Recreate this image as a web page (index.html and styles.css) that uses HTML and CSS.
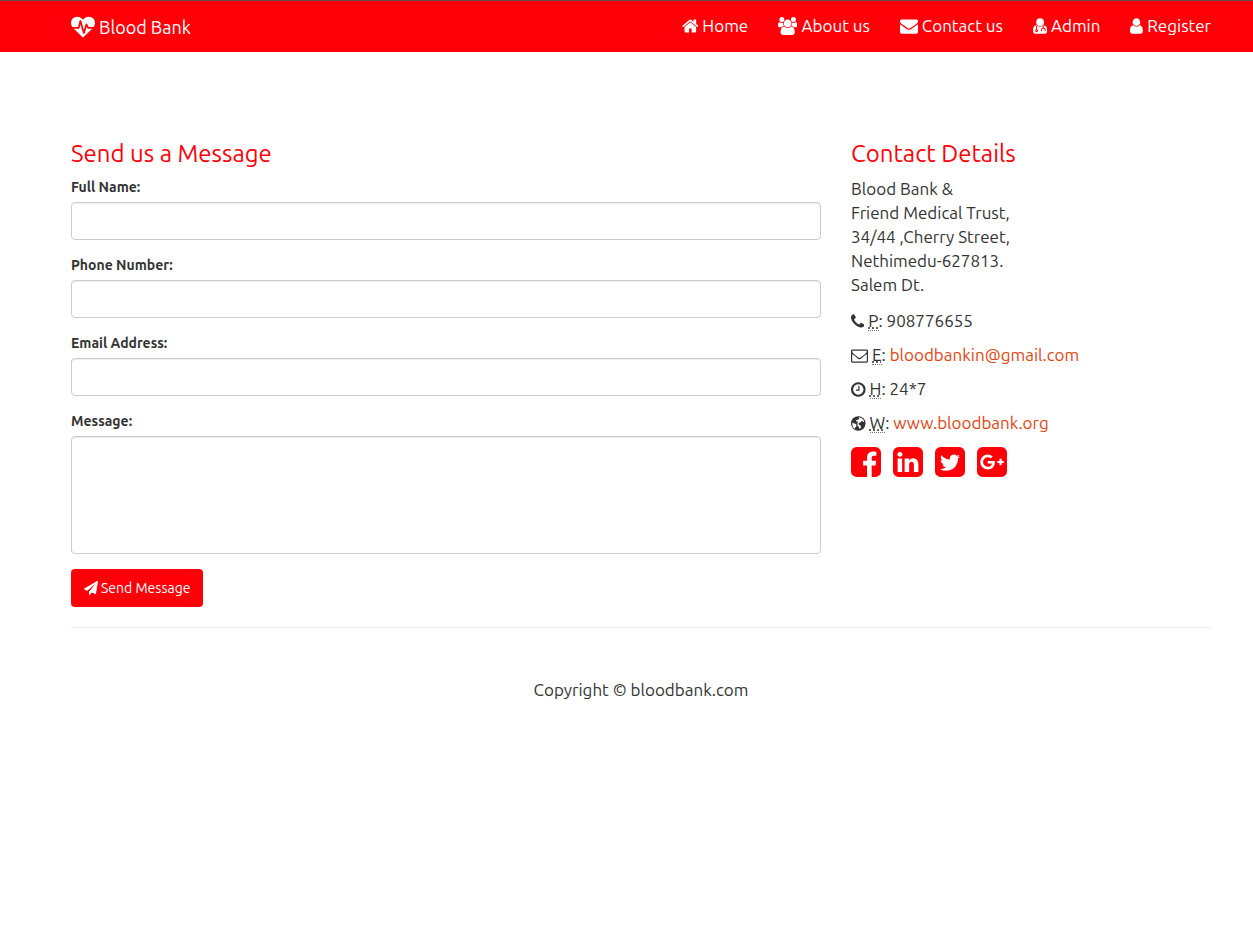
FILE: index.html
```html
<!DOCTYPE html>
<html lang="en">
<head>
<meta charset="utf-8">
<meta name="viewport" content="width=device-width, initial-scale=1">
<title>Blood Bank</title>
<link rel="stylesheet" href="styles.css">
</head>
<body>
<header class="navbar">
  <a class="brand" href="#">
    <svg class="icon icon-brand" viewBox="0 0 1792 1792" aria-hidden="true"><path d="M1280 1024h305q-5 6-10 10.500t-9 7.500l-3 4-623 600q-18 18-44 18t-44-18l-624-602q-5-2-21-20h369q22 0 39.500-13.500t22.500-34.500l70-281 190 667q6 20 23 33t39 13q21 0 38-13t23-33l146-485 56 112q18 35 57 35zm512-428q0 145-103 300h-369l-111-221q-8-17-25.500-27t-36.500-8q-45 5-56 46l-129 430-196-686q-6-20-23.500-33t-39.500-13-39 13.500-22 34.500l-116 464h-423q-103-155-103-300 0-220 127-344t351-124q62 0 126.500 21.500t120 58 95.500 68.500 76 68q36-36 76-68t95.500-68.500 120-58 126.500-21.500q224 0 351 124t127 344z"/></svg>
    <span>Blood Bank</span>
  </a>
  <nav class="menu">
    <a href="#"><svg class="icon" viewBox="64 0 1664 1792" aria-hidden="true"><path d="M1472 992v480q0 26-19 45t-45 19h-384v-384h-256v384h-384q-26 0-45-19t-19-45v-480q0-1 .5-3t.5-3l575-474 575 474q1 2 1 6zm223-69l-62 74q-8 9-21 11h-3q-13 0-21-7l-692-577-692 577q-12 8-24 7-13-2-21-11l-62-74q-8-10-7-23.500t11-21.500l719-599q32-26 76-26t76 26l244 204v-195q0-14 9-23t23-9h192q14 0 23 9t9 23v408l219 182q10 8 11 21.500t-7 23.500z"/></svg><span>Home</span></a>
    <a href="#"><svg class="icon" viewBox="0 0 1920 1792" aria-hidden="true"><path d="M593 896q-162 5-265 128h-134q-82 0-138-40.500t-56-118.500q0-353 124-353 6 0 43.500 21t97.500 42.500 119 21.500q67 0 133-23-5 37-5 66 0 139 81 256zm1071 637q0 120-73 189.500t-194 69.500h-874q-121 0-194-69.500t-73-189.500q0-53 3.500-103.500t14-109 26.500-108.500 43-97.500 62-81 85.500-53.500 111.500-20q10 0 43 21.500t73 48 107 48 135 21.500 135-21.500 107-48 73-48 43-21.500q61 0 111.500 20t85.500 53.500 62 81 43 97.500 26.500 108.500 14 109 3.500 103.500zm-1024-1277q0 106-75 181t-181 75-181-75-75-181 75-181 181-75 181 75 75 181zm704 384q0 159-112.500 271.500t-271.500 112.500-271.500-112.500-112.500-271.500 112.500-271.500 271.500-112.500 271.500 112.500 112.500 271.500zm576 225q0 78-56 118.500t-138 40.500h-134q-103-123-265-128 81-117 81-256 0-29-5-66 66 23 133 23 59 0 119-21.500t97.500-42.500 43.500-21q124 0 124 353zm-128-609q0 106-75 181t-181 75-181-75-75-181 75-181 181-75 181 75 75 181z"/></svg><span>About us</span></a>
    <a href="#"><svg class="icon" viewBox="0 0 1792 1792" aria-hidden="true"><path d="M1792 710v794q0 66-47 113t-113 47h-1472q-66 0-113-47t-47-113v-794q44 49 101 87 362 246 497 345 57 42 92.500 65.500t94.500 48 110 24.500h2q51 0 110-24.500t94.500-48 92.500-65.500q170-123 498-345 57-39 100-87zm0-294q0 79-49 151t-122 123q-376 261-468 325-10 7-42.500 30.500t-54 38-52 32.500-57.500 27-50 9h-2q-23 0-50-9t-57.500-27-52-32.500-54-38-42.500-30.500q-91-64-262-182.500t-205-142.500q-62-42-117-115.500t-55-136.500q0-78 41.500-130t118.500-52h1472q65 0 112.500 47t47.500 113z"/></svg><span>Contact us</span></a>
    <a href="#"><svg class="icon" viewBox="192 0 1408 1792" aria-hidden="true"><path d="M1600 1399q0 109-62.500 187t-150.500 78h-982q-88 0-150.500-78t-62.500-187q0-85 8.500-160.500t31.500-152 58.500-131 94-89 134.500-34.500q131 128 377 128t377-128q76 0 134.500 34.500t94 89 58.500 131 31.500 152 8.500 160.500z"/><circle cx="896" cy="512" r="384"/><path class="cutout" d="M550 900v370M1215 900v200M1030 1430v-130q0-170 185-170t185 170v130"/><circle class="cutout" cx="550" cy="1370" r="90"/></svg><span>Admin</span></a>
    <a href="#"><svg class="icon" viewBox="256 0 1280 1792" aria-hidden="true"><path d="M1536 1399q0 109-62.500 187t-150.500 78h-854q-88 0-150.500-78t-62.500-187q0-85 8.500-160.500t31.500-152 58.500-131 94-89 134.500-34.500q131 128 313 128t313-128q76 0 134.500 34.500t94 89 58.500 131 31.500 152 8.500 160.500zm-256-887q0 159-112.500 271.500t-271.500 112.500-271.500-112.500-112.500-271.500 112.500-271.500 271.500-112.500 271.500 112.500 112.500 271.500z"/></svg><span>Register</span></a>
  </nav>
</header>
<div class="page">
  <main class="columns">
    <section>
      <h1 class="title">Send us a Message</h1>
      <form class="form">
        <div class="field"><label for="name">Full Name:</label><input id="name" type="text"></div>
        <div class="field"><label for="phone">Phone Number:</label><input id="phone" type="tel"></div>
        <div class="field"><label for="email">Email Address:</label><input id="email" type="email"></div>
        <div class="field"><label for="message">Message:</label><textarea id="message" rows="5"></textarea></div>
        <button class="send" type="button"><svg class="icon" viewBox="0 0 1792 1792" aria-hidden="true"><path d="M1764 11q33 24 27 64l-256 1536q-5 29-32 45-14 8-31 8-11 0-24-5l-453-185-242 295q-18 23-49 23-13 0-22-4-19-7-30.500-23.500t-11.500-36.500v-349l864-1059-1069 925-395-162q-37-14-40-55-2-40 32-59l1664-960q15-9 32-9 20 0 36 11z"/></svg><span>Send Message</span></button>
      </form>
    </section>
    <section>
      <h2 class="title">Contact Details</h2>
      <address class="address">Blood Bank &amp;<br>Friend Medical Trust,<br>34/44 ,Cherry Street,<br>Nethimedu-627813.<br>Salem Dt.</address>
      <ul class="details">
        <li><svg class="icon" viewBox="192 0 1408 1792" aria-hidden="true"><path d="M1600 1240q0 27-10 70.500t-21 68.500q-21 50-122 106-94 51-186 51-27 0-53-3.500t-57.500-12.500-47-14.500-55.500-20.500-49-18q-98-35-175-83-127-79-264-216t-216-264q-48-77-83-175-3-9-18-49t-20.500-55.500-14.500-47-12.500-57.500-3.500-53q0-92 51-186 56-101 106-122 25-11 68.500-21t70.500-10q14 0 21 3 18 6 53 76 11 19 30 54t35 63.500 31 53.500q3 4 17.500 25t21.500 35.500 7 28.500q0 20-28.500 50t-62 55-62 53-28.500 46q0 9 5 22.500t8.500 20.500 14 24 11.500 19q76 137 174 235t235 174q2 1 19 11.500t24 14 20.500 8.500 22.500 5q18 0 46-28.500t53-62 55-62 50-28.500q14 0 28.500 7t35.500 21.500 25 17.500q25 15 53.500 31t63.500 35 54 30q70 35 76 53 3 7 3 21z"/></svg><span><abbr title="Phone">P</abbr>: 908776655</span></li>
        <li><svg class="icon" viewBox="0 0 1792 1792" aria-hidden="true"><path d="M1664 1504v-768q-32 36-69 66-268 206-426 338-51 43-83 67t-86.500 48.500-102.500 24.500h-2q-48 0-102.500-24.500t-86.500-48.500-83-67q-158-132-426-338-37-30-69-66v768q0 13 9.500 22.500t22.500 9.500h1472q13 0 22.500-9.500t9.500-22.500zm0-1051v-24.500l-.5-13-3-12.500-5.500-9-9-7.500-14-2.500h-1472q-13 0-22.500 9.500t-9.500 22.500q0 168 147 284 193 152 401 317 6 5 35 29.500t46 37.500 44.500 31.500 50.500 27.500 43 9h2q20 0 43-9t50.500-27.500 44.500-31.500 46-37.500 35-29.500q208-165 401-317 54-43 100.500-115.500t46.500-131.500zm128-37v1088q0 66-47 113t-113 47h-1472q-66 0-113-47t-47-113v-1088q0-66 47-113t113-47h1472q66 0 113 47t47 113z"/></svg><span><abbr title="Email">E</abbr>: <a href="mailto:bloodbankin@gmail.com">bloodbankin@gmail.com</a></span></li>
        <li><svg class="icon" viewBox="128 0 1536 1792" aria-hidden="true"><path d="M1024 544v448q0 14-9 23t-23 9h-320q-14 0-23-9t-9-23v-64q0-14 9-23t23-9h224v-352q0-14 9-23t23-9h64q14 0 23 9t9 23zm416 352q0-148-73-273t-198-198-273-73-273 73-198 198-73 273 73 273 198 198 273 73 273-73 198-198 73-273zm224 0q0 209-103 385.500t-279.500 279.500-385.500 103-385.500-103-279.500-279.500-103-385.500 103-385.500 279.500-279.500 385.500-103 385.500 103 279.500 279.500 103 385.500z"/></svg><span><abbr title="Hours">H</abbr>: 24*7</span></li>
        <li><svg class="icon" viewBox="128 0 1536 1792" aria-hidden="true"><circle cx="896" cy="896" r="768"/><path class="land" d="M960 250l230 40 230 190 110 230-90 40-120-120-140 40-20 90-130 30-120 120 50 130 170 60 60 170-110 170-100-30-50-190-120-150-10-200 70-140-70-60-90 40-60-110 130-90 180-30zM270 800l200 90 170 60 70 130-40 160-110 80-40 160-150-130-90-190z"/></svg><span><abbr title="Website">W</abbr>: <a href="#">www.bloodbank.org</a></span></li>
      </ul>
      <div class="social">
        <a href="#" aria-label="Facebook"><svg class="icon" viewBox="128 128 1536 1536"><path d="M1376 128q119 0 203.500 84.500t84.500 203.500v960q0 119-84.500 203.500t-203.500 84.500h-188v-595h199l30-232h-229v-148q0-56 23.500-84t91.500-28l122-1v-207q-63-9-178-9-136 0-217.500 80t-81.500 226v171h-200v232h200v595h-532q-119 0-203.500-84.500t-84.500-203.500v-960q0-119 84.500-203.500t203.500-84.500h960z"/></svg></a>
        <a href="#" aria-label="LinkedIn"><svg class="icon" viewBox="128 128 1536 1536"><path d="M365 1414h231v-694h-231v694zm246-908q-1-52-36-86t-93-34-94.500 34-36.500 86q0 51 35.500 85.500t92.500 34.500h1q59 0 95-34.500t36-85.500zm585 908h231v-398q0-154-73-233t-193-79q-136 0-209 117h2v-101h-231q3 66 0 694h231v-388q0-38 7-56 15-35 45-59.500t74-24.500q116 0 116 157v371zm468-998v960q0 119-84.500 203.500t-203.500 84.500h-960q-119 0-203.500-84.500t-84.500-203.500v-960q0-119 84.500-203.500t203.500-84.500h960q119 0 203.500 84.500t84.500 203.500z"/></svg></a>
        <a href="#" aria-label="Twitter"><svg class="icon" viewBox="128 128 1536 1536"><path d="M1408 610q-56 25-121 34 68-40 93-117-65 38-134 51-61-66-153-66-87 0-148.500 61.500t-61.500 148.500q0 29 5 48-129-7-242-65t-192-155q-29 50-29 106 0 114 91 175-47-1-100-26v2q0 75 50 133.500t123 72.500q-29 8-51 8-13 0-39-4 21 63 74.500 104t121.500 42q-116 90-261 90-26 0-50-3 148 94 322 94 112 0 210-35.500t168-95 120.500-137 75-162 24.500-168.500q0-18-1-27 63-45 105-109zm256-194v960q0 119-84.500 203.500t-203.500 84.500h-960q-119 0-203.500-84.500t-84.500-203.500v-960q0-119 84.500-203.500t203.500-84.500h960q119 0 203.500 84.500t84.500 203.500z"/></svg></a>
        <a href="#" aria-label="Google Plus"><svg class="icon" viewBox="128 128 1536 1536"><path d="M1045 905q0-26-6-64h-362v132h217q-3 24-16.500 50t-37.500 53-66.500 44.500-96.500 17.500q-99 0-169-71t-70-171 70-171 169-71q92 0 153 59l104-101q-108-100-257-100-160 0-272 112.500t-112 271.500 112 271.500 272 112.500q165 0 266.500-105t101.500-270zm345 46h109v-110h-109v-110h-110v110h-110v110h110v110h110v-110zm274-535v960q0 119-84.500 203.500t-203.500 84.500h-960q-119 0-203.500-84.500t-84.500-203.500v-960q0-119 84.500-203.500t203.500-84.500h960q119 0 203.500 84.500t84.500 203.500z"/></svg></a>
      </div>
    </section>
  </main>
  <footer class="footer">Copyright © bloodbank.com</footer>
</div>
</body>
</html>
```
FILE: styles.css
```css
* { box-sizing: border-box; }

body {
  margin: 0;
  background: #fff;
  color: #333;
  font: 17px/24px Ubuntu, "Noto Sans", sans-serif;
}

.icon { height: 17px; fill: currentColor; flex: none; }

.navbar {
  display: flex;
  align-items: center;
  justify-content: space-between;
  height: 52px;
  padding: 0 42px 0 71px;
  border-top: 1px solid #555;
  background: #ff0008;
}
.navbar a { display: flex; align-items: center; gap: 4px; color: #fff; text-decoration: none; }
.navbar .brand { font-size: 18px; }
.navbar .icon { height: 18px; }
.navbar .icon-brand { height: 24px; }
.menu { display: flex; gap: 30px; padding-bottom: 2px; }
.cutout { fill: none; stroke: #ff0008; stroke-width: 100; }

.page { padding: 88px 42px 0 71px; }
.columns {
  display: grid;
  grid-template-columns: 25fr 12fr;
  gap: 30px;
  padding-bottom: 20px;
  border-bottom: 1px solid #eee;
}
.title { margin: 0 0 10px; color: #ff0008; font-size: 24px; font-weight: 400; line-height: 27px; }

.field { display: flex; flex-direction: column; gap: 5px; margin-bottom: 15px; }
.field label { font-size: 14px; font-weight: 700; line-height: 20px; }
.field input,
.field textarea {
  width: 100%;
  height: 38px;
  padding: 8px 12px;
  border: 1px solid #ccc;
  border-radius: 4px;
  box-shadow: inset 0 1px 1px rgba(0, 0, 0, 0.075);
  background: #fff;
  color: #555;
  font: inherit;
}
.field textarea { height: 118px; resize: none; }

.send {
  display: flex;
  align-items: center;
  gap: 3px;
  padding: 9px 13px;
  border: 0;
  border-radius: 4px;
  background: #ff0008;
  color: #fff;
  font: 14px/20px Ubuntu, "Noto Sans", sans-serif;
}
.send .icon { height: 14px; }

.address { margin-bottom: 12px; font-style: normal; }
.details { display: grid; gap: 10px; margin: 0 0 12px; padding: 0; list-style: none; }
.details li { display: flex; align-items: center; gap: 4px; }
.details abbr { text-decoration: underline dotted; border-bottom: 1px dotted #777; }
.details a { color: #dd4814; text-decoration: none; }
.land { fill: #fff; }

.social { display: flex; gap: 12px; }
.social a { display: flex; color: #ff0008; }
.social .icon { height: 30px; }

.footer { padding: 50px 0; text-align: center; }
```
